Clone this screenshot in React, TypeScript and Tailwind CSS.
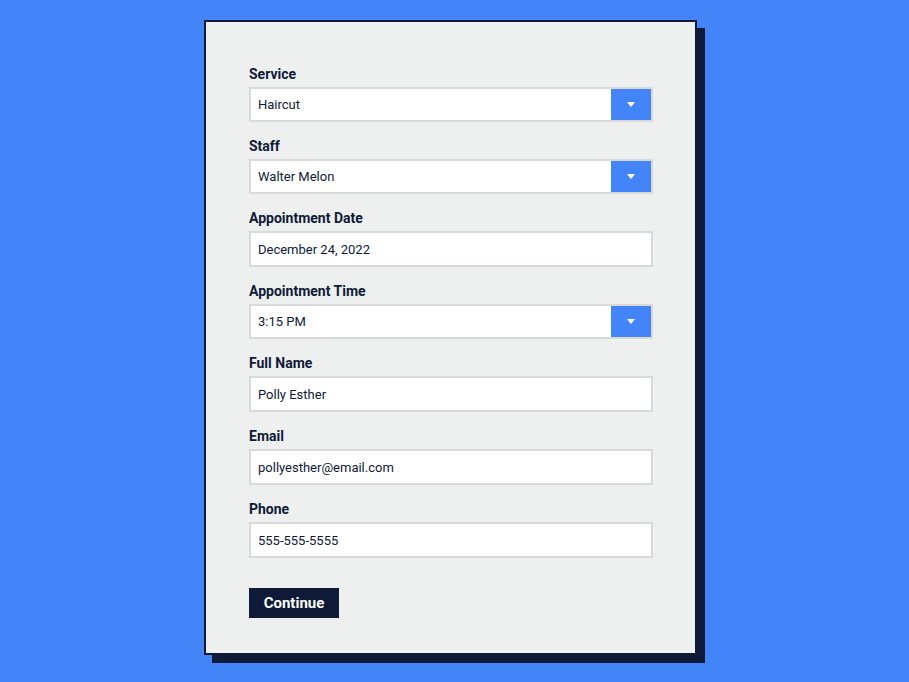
import { ReactNode } from 'react';

const fields = [
  { label: 'Service', value: 'Haircut', select: true },
  { label: 'Staff', value: 'Walter Melon', select: true },
  { label: 'Appointment Date', value: 'December 24, 2022', select: false },
  { label: 'Appointment Time', value: '3:15 PM', select: true },
  { label: 'Full Name', value: 'Polly Esther', select: false },
  { label: 'Email', value: 'pollyesther@email.com', select: false },
  { label: 'Phone', value: '555-555-5555', select: false },
];

const Field = ({ label, children }: { label: string; children: ReactNode }) => (
  <div className="mb-[15px]">
    <label className="block text-[14px] leading-[19px] font-bold text-[#0e1a38] mb-[3px]">{label}</label>
    {children}
  </div>
);

export default function App() {
  return (
    <div
      className="min-h-screen w-full bg-[#4385f8] flex items-center justify-center"
      style={{ fontFamily: 'Roboto, "Liberation Sans", sans-serif' }}
    >
      <div className="pr-2 pb-2">
        <form className="w-[493px] h-[635px] bg-[#eef0ef] border-2 border-[#0e1a38] shadow-[8px_8px_0_#0e1a38] pt-[43px] px-[43px]">
          {fields.map((f) =>
            f.select ? (
              <Field key={f.label} label={f.label}>
                <div className="flex h-[35px] w-[404px] border-2 border-[#d9d9d9] bg-white">
                  <div className="flex-1 flex items-center pl-[7px] pt-[2px] text-[13px] text-[#0e1a38]">{f.value}</div>
                  <div className="w-10 bg-[#4385f8] flex items-center justify-center">
                    <svg width="8" height="5" viewBox="0 0 8 5">
                      <path d="M0 0h8L4 5z" fill="#fff" />
                    </svg>
                  </div>
                </div>
              </Field>
            ) : (
              <Field key={f.label} label={f.label}>
                <input
                  readOnly
                  value={f.value}
                  className="block h-[36px] w-[404px] border-2 border-[#d9d9d9] bg-white pl-[7px] pt-[2px] text-[13px] text-[#0e1a38] outline-none"
                />
              </Field>
            )
          )}
          <button
            type="button"
            className="mt-[15px] h-[30px] w-[90px] bg-[#0e1a38] text-white text-[15px] font-bold pt-px"
          >
            Continue
          </button>
        </form>
      </div>
    </div>
  );
}
